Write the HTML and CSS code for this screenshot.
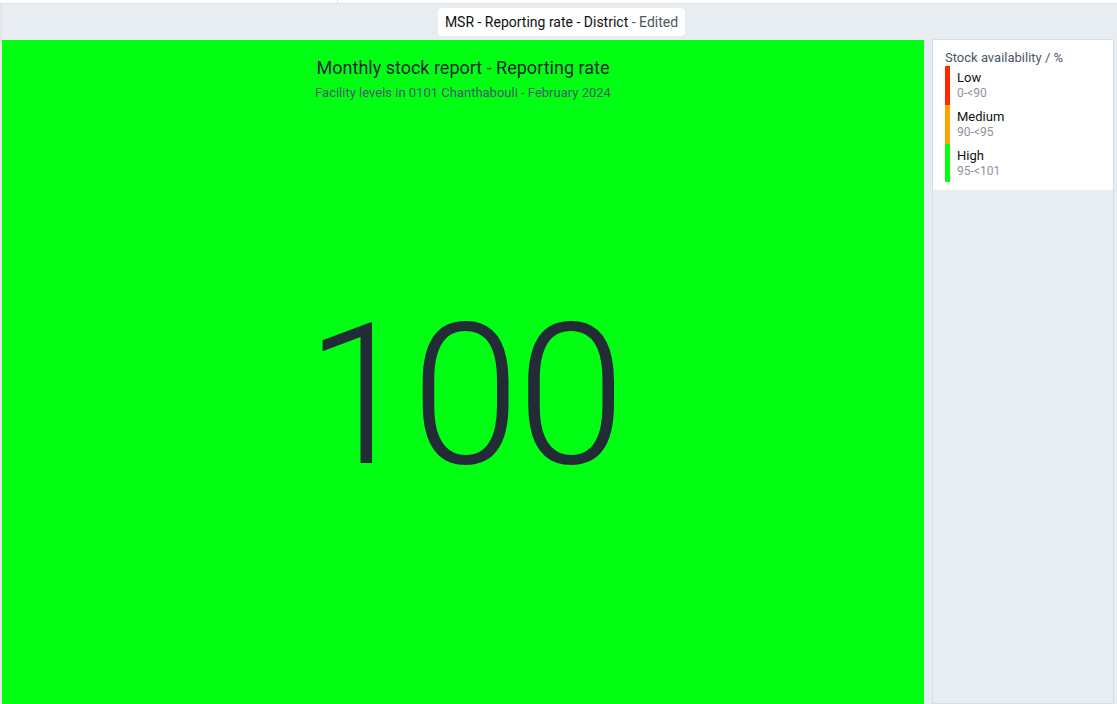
FILE: index.html
```html
<!DOCTYPE html>
<html>
<head>
<meta charset="utf-8">
<link rel="stylesheet" href="styles.css">
</head>
<body>
<div class="topstrip"><div class="topstrip-left"></div></div>
<div class="main">
  <div class="header">
    <div class="chip">MSR - Reporting rate - District<span class="edited"> - Edited</span></div>
  </div>
  <div class="content">
    <div class="viz">
      <div class="viz-titles">
        <div class="viz-title">Monthly stock report - Reporting rate</div>
        <div class="viz-subtitle">Facility levels in 0101 Chanthabouli - February 2024</div>
      </div>
      <div class="viz-value-wrap"><div class="viz-value">100</div></div>
    </div>
    <div class="legend-panel">
      <div class="legend">
        <div class="legend-title">Stock availability / %</div>
        <div class="legend-item low"><div class="legend-name">Low</div><div class="legend-range">0-&lt;90</div></div>
        <div class="legend-item medium"><div class="legend-name">Medium</div><div class="legend-range">90-&lt;95</div></div>
        <div class="legend-item high"><div class="legend-name">High</div><div class="legend-range">95-&lt;101</div></div>
      </div>
    </div>
  </div>
</div>
</body>
</html>
```

FILE: styles.css
```css
html, body {
  margin: 0;
  padding: 0;
  height: 100%;
  overflow: hidden;
  background: #ffffff;
  font-family: Roboto, "Liberation Sans", sans-serif;
}

.topstrip {
  height: 3px;
  border-bottom: 1px solid #dfe3e8;
  background: #ffffff;
  display: flex;
}

.topstrip-left {
  width: 337px;
  border-right: 1px solid #dfe3e8;
}

.main {
  height: 700px;
  background: #e8edf2;
  border-left: 2px solid #e2e6ea;
  display: flex;
  flex-direction: column;
}

.header {
  height: 36px;
  display: flex;
  align-items: center;
  justify-content: center;
  padding-left: 4px;
}

.chip {
  background: #ffffff;
  border-radius: 4px;
  height: 28px;
  line-height: 28px;
  padding: 0 7px;
  font-size: 14px;
  color: #111111;
}

.edited {
  color: #4a5768;
}

.content {
  flex: 1;
  display: flex;
  gap: 8px;
  min-height: 0;
}

.viz {
  width: 922px;
  background: #00ff13;
  display: flex;
  flex-direction: column;
}

.viz-titles {
  text-align: center;
  padding-top: 17px;
}

.viz-title {
  font-size: 18px;
  line-height: 22px;
  color: #212934;
}

.viz-subtitle {
  font-size: 13px;
  line-height: 16px;
  margin-top: 6px;
  color: #4a5768;
}

.viz-value-wrap {
  flex: 1;
  display: flex;
  align-items: center;
  justify-content: center;
  padding-bottom: 14px;
  padding-left: 2px;
}

.viz-value {
  font-size: 196px;
  font-weight: 300;
  color: #232b36;
  line-height: 1;
  letter-spacing: -3px;
}

.legend-panel {
  width: 180px;
  border: 1px solid #d5dde5;
  border-top: 0;
  background: #e8edf2;
}

.legend {
  background: #ffffff;
  padding: 9px 12px 8px 12px;
  border-top: 1px solid #d5dde5;
  margin-top: -1px;
}

.legend-title {
  font-size: 13px;
  line-height: 17px;
  color: #4a5768;
}

.legend-item {
  border-left: 5px solid #ff2a00;
  padding: 4px 0 4px 7px;
}

.legend-item.medium { border-left-color: #ffa500; }
.legend-item.high { border-left-color: #00ff13; padding-bottom: 3px; }

.legend-name {
  font-size: 13px;
  line-height: 16px;
  color: #111111;
}

.legend-range {
  font-size: 12px;
  line-height: 15px;
  color: #8a939e;
}
```
